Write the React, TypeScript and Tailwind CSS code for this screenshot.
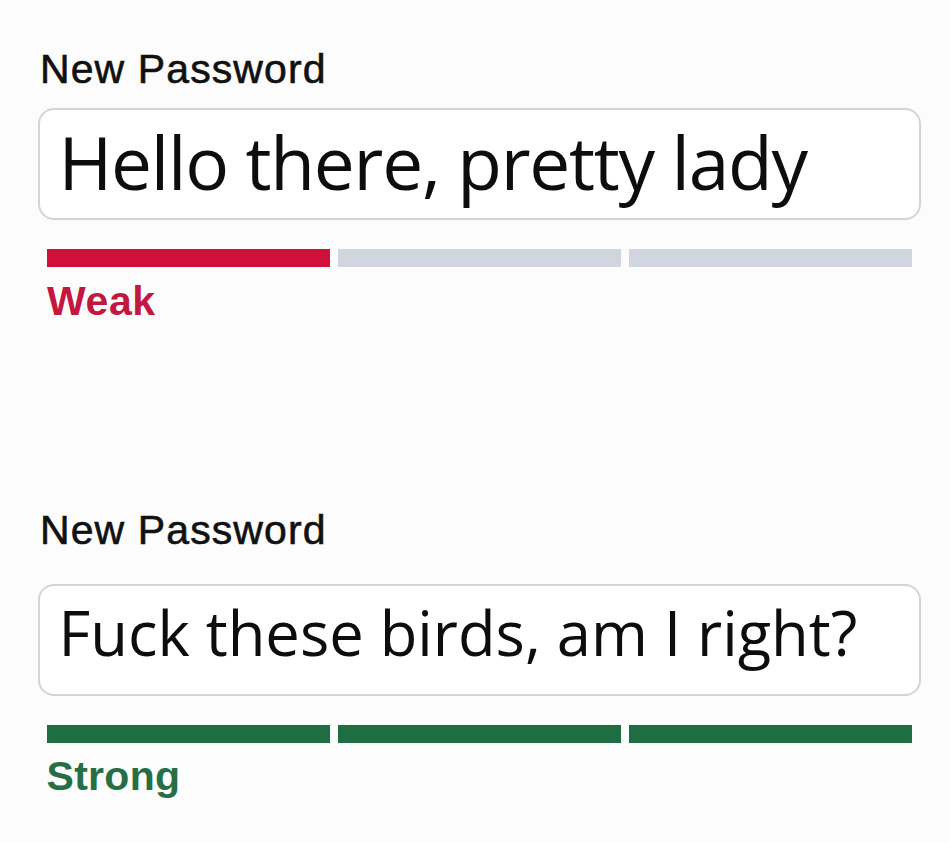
import React from "react";

type Strength = "weak" | "strong";

const PasswordField = ({
  value,
  strength,
  labelGap,
  textStyle,
  textTop,
  boxHeight,
  barsGap,
  className,
}: {
  value: string;
  strength: Strength;
  labelGap: string;
  textStyle: string;
  textTop: string;
  boxHeight: string;
  barsGap: string;
  className?: string;
}) => {
  const filled = strength === "strong" ? 3 : 1;
  const fillColor = strength === "strong" ? "bg-[#1e6e42]" : "bg-[#d00f3b]";
  return (
    <div className={className}>
      <label className="ml-[2px] block h-[41px] text-[41px] leading-none tracking-[1.1px] text-[#111111] [-webkit-text-stroke:0.6px_#111111] font-['Liberation_Sans',Arial,sans-serif]">
        New Password
      </label>
      <div
        className={`${labelGap} ${boxHeight} ${textTop} w-[883px] rounded-[16px] border-2 border-[#d3d3de] bg-white pl-[18.5px]`}
      >
        <div
          className={`${textStyle} leading-none whitespace-nowrap text-[#0d0d0d] font-['Open_Sans',sans-serif]`}
        >
          {value}
        </div>
      </div>
      <div className={`${barsGap} ml-[9px] flex w-[865px] gap-[8.5px]`}>
        {[0, 1, 2].map((i) => (
          <div
            key={i}
            className={`h-[18.5px] flex-1 ${i < filled ? fillColor : "bg-[#d1d5e0]"}`}
          />
        ))}
      </div>
      {strength === "weak" ? (
        <p className="mt-[14px] ml-[9px] h-[41px] text-[41px] font-bold leading-none tracking-[0.6px] text-[#c4173f] font-['Liberation_Sans',Arial,sans-serif]">
          Weak
        </p>
      ) : (
        <p className="mt-[12.5px] ml-[8.5px] h-[41px] text-[41px] font-bold leading-none tracking-[0.3px] text-[#266f45] font-['Liberation_Sans',Arial,sans-serif]">
          Strong
        </p>
      )}
    </div>
  );
};

export default function App() {
  return (
    <div className="min-h-screen bg-[#fcfcfd] pt-[48.5px] pl-[38px]">
      <PasswordField
        value="Hello there, pretty lady"
        strength="weak"
        labelGap="mt-[18px]"
        textStyle="text-[73px] tracking-[-1.25px]"
        textTop="pt-[15.5px]"
        boxHeight="h-[112.5px]"
        barsGap="mt-[28.5px]"
      />
      <PasswordField
        className="mt-[188px]"
        value="Fuck these birds, am I right?"
        strength="strong"
        labelGap="mt-[33px]"
        textStyle="text-[61.5px]"
        textTop="pt-[16px]"
        boxHeight="h-[111.5px]"
        barsGap="mt-[29px]"
      />
    </div>
  );
}
